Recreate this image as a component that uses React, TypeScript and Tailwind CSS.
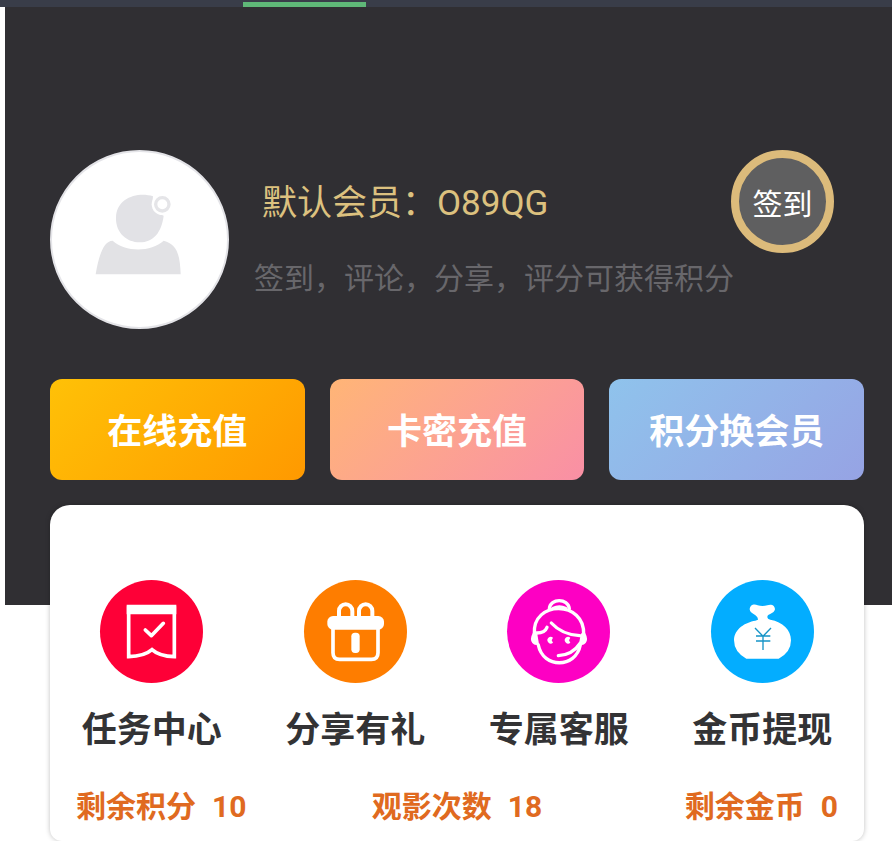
import type { ReactNode } from "react";

const recharges = [
  { name: "在线充值", color: "from-[#ffc107] to-[#ff9900]" },
  { name: "卡密充值", color: "from-[#ffb576] to-[#f98fa5]" },
  { name: "积分换会员", color: "from-[#8fc3ec] to-[#96a3e4]" },
];

const stats = [
  { name: "剩余积分", value: 10, align: "justify-start" },
  { name: "观影次数", value: 18, align: "justify-center" },
  { name: "剩余金币", value: 0, align: "justify-end" },
];

function TaskIcon() {
  return (
    <svg viewBox="31 31 309 309" fill="none" stroke="#fff" aria-hidden="true">
      <path d="M111 105h149v29H111z" fill="#fff" stroke="none" />
      <path
        d="M117 110v151Q164 260 187 240Q209 260 254 261V110"
        strokeWidth="11"
      />
      <path
        d="M167 181l18 17 36-37"
        strokeWidth="11"
        strokeLinecap="round"
        strokeLinejoin="round"
      />
    </svg>
  );
}

function GiftIcon() {
  return (
    <svg viewBox="27 31 309 309" fill="none" stroke="#fff" aria-hidden="true">
      <path
        d="M132 142v-18a20 20 0 0 1 40 0v18M192 142v-18a20 20 0 0 1 40 0v18"
        strokeWidth="12"
      />
      <rect x="97" y="139" width="170" height="41" rx="17" fill="#fff" stroke="none" />
      <path
        d="M114 174v75q0 20 20 20h95q20 0 20-20v-75"
        strokeWidth="11"
      />
      <rect x="169" y="189" width="25" height="61" rx="11" fill="#fff" stroke="none" />
    </svg>
  );
}

function ServiceIcon() {
  return (
    <svg
      viewBox="23 31 309 309"
      fill="none"
      stroke="#fff"
      strokeWidth="10"
      strokeLinecap="round"
      aria-hidden="true"
    >
      <path d="M150 117C153 85 206 85 210 117" />
      <path d="M160 115q20-9 40 0" strokeWidth="7" />
      <path d="M105 193C98 91 258 91 253 195" />
      <path d="M117 226C131 297 229 297 243 226" />
      <path d="M110 190q26 1 33-17M156 160q32 35 85 38" />
      <path
        d="M101 189q9-3 13 5l5 29q-11 8-20-3-9-12 2-31zM257 189q-9-3-13 5l-5 29q11 8 20-3 9-12-2-31z"
        fill="#fff"
        stroke="none"
      />
      <path d="M242 221q-22 34-65 37" />
      <path
        d="M161 204a10 10 0 1 0 0 15l-4-7zM213 204a10 10 0 1 0 0 15l-4-7z"
        fill="#fff"
        stroke="none"
      />
    </svg>
  );
}

function CoinIcon() {
  return (
    <svg viewBox="33 31 309 309" fill="none" aria-hidden="true">
      <path
        d="M174 150C174 134 150 134 149 119C151 103 164 103 173 107C182 110 193 110 202 107C211 103 224 104 225 119C222 133 204 132 202 141Q202 148 211 150C248 157 273 180 273 212Q273 248 236 267H139Q102 247 102 211C103 177 136 158 166 153Z"
        fill="#fff"
      />
      <path
        d="M165 175l24 25 24-25M168 199h43M168 214h43M189 199v42"
        stroke="#1594c7"
        strokeWidth="4"
      />
    </svg>
  );
}

const menus: { name: string; color: string; icon: ReactNode }[] = [
  { name: "任务中心", color: "bg-[#fe0037]", icon: <TaskIcon /> },
  { name: "分享有礼", color: "bg-[#fe7d00]", icon: <GiftIcon /> },
  { name: "专属客服", color: "bg-[#fd00c3]", icon: <ServiceIcon /> },
  { name: "金币提现", color: "bg-[#03adff]", icon: <CoinIcon /> },
];

function Avatar() {
  return (
    <div className="size-[179px] shrink-0 rounded-full border-2 border-[#e4e4e8] bg-white">
      <svg viewBox="37 37 525 525" role="img" aria-label="头像">
        <path
          d="M340 170C295 156 230 174 229 235C228 280 262 308 300 308C342 308 366 277 372 228C350 222 335 200 340 170Z"
          fill="#e2e2e6"
        />
        <path
          d="M168 404C176 355 190 303 219 303C255 337 333 339 372 303C414 313 421 350 423 404Z"
          fill="#e2e2e5"
        />
        <circle cx="368" cy="194" r="32" fill="#fff" />
        <circle cx="368" cy="194" r="20" stroke="#e5e5e8" strokeWidth="10" fill="none" />
        <path d="M368 182v24M356 194h24" stroke="#fff" strokeWidth="9" />
      </svg>
    </div>
  );
}

export default function App() {
  return (
    <div className="bg-white font-['Roboto','Noto_Sans_CJK_SC',sans-serif]">
      <div className="flex h-[7px] items-end bg-[#393d49]">
        <div className="ml-[243px] h-[5px] w-[123px] bg-[#5fb878]"></div>
      </div>

      <main className="ml-[5px]">
        <section className="bg-[#302f33] pt-[143px] pr-7 pb-[125px] pl-[45px]">
          <div className="flex gap-[25px]">
            <Avatar />
            <div className="min-w-0 flex-1">
              <div className="flex items-center justify-between pr-[30px] pl-2">
                <h1 className="pt-1.5 text-[35px] text-[#dcc17f]">默认会员：O89QG</h1>
                <button className="size-[103px] rounded-full border-8 border-[#dcbb7b] bg-[#5f5f60] pt-1.5 text-[30px] text-white">
                  签到
                </button>
              </div>
              <p className="text-[30px] leading-[52px] whitespace-nowrap text-[#68676b]">
                签到，评论，分享，评分可获得积分
              </p>
            </div>
          </div>

          <div className="mt-[50px] grid grid-cols-3 gap-[25px]">
            {recharges.map((item) => (
              <button
                key={item.name}
                className={`h-[101px] rounded-xl bg-linear-135 pt-2 text-[35px] font-bold text-white ${item.color}`}
              >
                {item.name}
              </button>
            ))}
          </div>
        </section>

        <section className="relative -mt-[100px] mr-7 ml-[45px] rounded-t-[20px] rounded-b-xl bg-white pt-[75px] pb-3 shadow-[0_0_5px_rgba(0,0,0,0.25)]">
          <div className="grid grid-cols-4">
            {menus.map((item) => (
              <a key={item.name} href="#" className="flex flex-col items-center gap-[22px]">
                <span className={`size-[103px] rounded-full ${item.color}`}>
                  {item.icon}
                </span>
                <span className="text-[35px] leading-[52px] font-bold text-[#333335]">
                  {item.name}
                </span>
              </a>
            ))}
          </div>

          <div className="mt-7 grid grid-cols-3 px-[26px] text-[30px] leading-[44px] font-bold text-[#e06a20]">
            {stats.map((item) => (
              <div key={item.name} className={`flex gap-4 ${item.align}`}>
                <span>{item.name}</span>
                <span>{item.value}</span>
              </div>
            ))}
          </div>
        </section>
      </main>
    </div>
  );
}
